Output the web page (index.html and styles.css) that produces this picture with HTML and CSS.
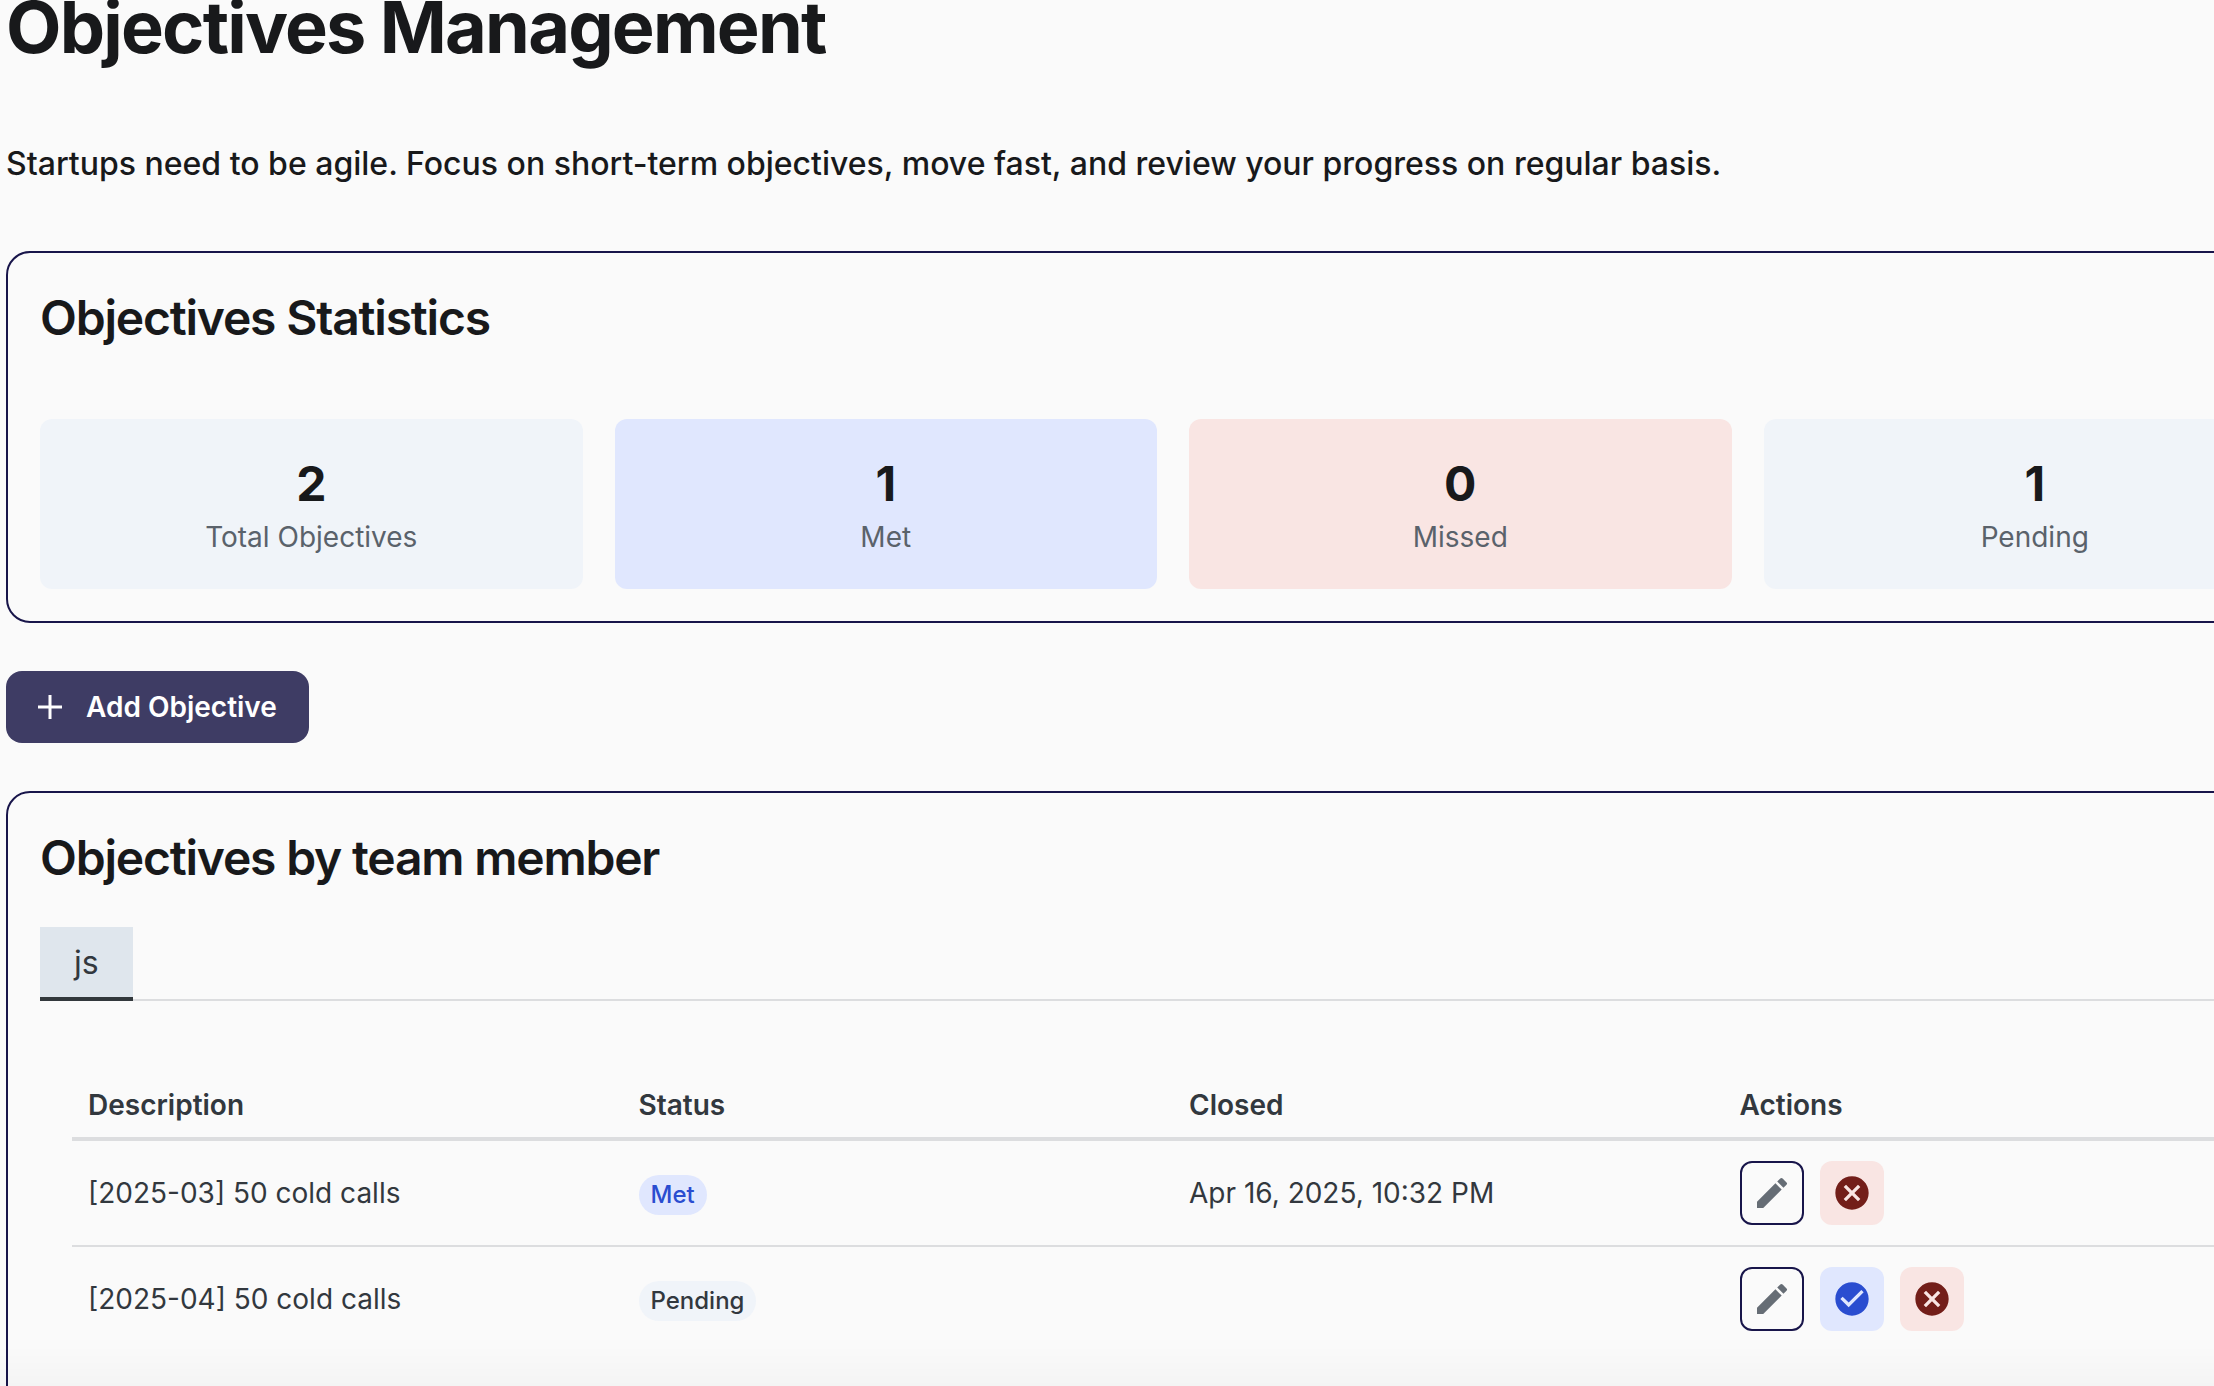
FILE: index.html
```html
<!DOCTYPE html>
<html lang="en">
<head>
  <meta charset="UTF-8">
  <title>Objectives Management</title>
  <link rel="stylesheet" href="styles.css">
</head>
<body>
  <main class="page">
    <h1>Objectives Management</h1>
    <p class="intro">Startups need to be agile. Focus on short-term objectives, move fast, and review your progress on regular basis.</p>

    <section class="card">
      <h2>Objectives Statistics</h2>
      <div class="stats">
        <div class="stat">
          <div class="stat-value">2</div>
          <div class="stat-label">Total Objectives</div>
        </div>
        <div class="stat stat-met">
          <div class="stat-value">1</div>
          <div class="stat-label">Met</div>
        </div>
        <div class="stat stat-missed">
          <div class="stat-value">0</div>
          <div class="stat-label">Missed</div>
        </div>
        <div class="stat">
          <div class="stat-value">1</div>
          <div class="stat-label">Pending</div>
        </div>
      </div>
    </section>

    <button type="button" class="add-btn">
      <svg viewBox="0 0 24 24" width="24" height="24" fill="none" stroke="currentColor" stroke-width="3"><path d="M12 0v24M0 12h24"/></svg>
      Add Objective
    </button>

    <section class="card">
      <h2>Objectives by team member</h2>
      <div class="tabs" role="tablist">
        <button type="button" class="tab" role="tab" aria-selected="true">js</button>
      </div>

      <div class="tab-panel" role="tabpanel">
        <table>
          <thead>
            <tr>
              <th>Description</th>
              <th>Status</th>
              <th>Closed</th>
              <th>Actions</th>
            </tr>
          </thead>
          <tbody>
            <tr>
              <td>[2025-03] 50 cold calls</td>
              <td><span class="badge badge-met">Met</span></td>
              <td>Apr 16, 2025, 10:32 PM</td>
              <td>
                <div class="actions">
                  <button type="button" class="icon-btn edit" aria-label="Edit"><svg viewBox="0 0 24 24"><use href="#i-pencil"/></svg></button>
                  <button type="button" class="icon-btn missed" aria-label="Mark as missed"><svg viewBox="0 0 24 24"><use href="#i-cross"/></svg></button>
                </div>
              </td>
            </tr>
            <tr>
              <td>[2025-04] 50 cold calls</td>
              <td><span class="badge">Pending</span></td>
              <td></td>
              <td>
                <div class="actions">
                  <button type="button" class="icon-btn edit" aria-label="Edit"><svg viewBox="0 0 24 24"><use href="#i-pencil"/></svg></button>
                  <button type="button" class="icon-btn met" aria-label="Mark as met"><svg viewBox="0 0 24 24"><use href="#i-check"/></svg></button>
                  <button type="button" class="icon-btn missed" aria-label="Mark as missed"><svg viewBox="0 0 24 24"><use href="#i-cross"/></svg></button>
                </div>
              </td>
            </tr>
          </tbody>
        </table>
      </div>
    </section>
  </main>
  <div class="bottom-fade"></div>

  <svg class="sprite" aria-hidden="true">
    <symbol id="i-pencil" viewBox="0 0 24 24">
      <path d="M14.06 6.19 17.81 9.94 6.75 21H3v-3.75zM20.71 7.04a1 1 0 0 0 0-1.41l-2.34-2.34a1 1 0 0 0-1.41 0l-1.83 1.83 3.75 3.75z"/>
    </symbol>
    <symbol id="i-cross" viewBox="0 0 24 24">
      <path d="M12 2C6.47 2 2 6.47 2 12s4.47 10 10 10 10-4.47 10-10S17.53 2 12 2zm5 13.59L15.59 17 12 13.41 8.41 17 7 15.59 10.59 12 7 8.41 8.41 7 12 10.59 15.59 7 17 8.41 13.41 12z"/>
    </symbol>
    <symbol id="i-check" viewBox="0 0 24 24">
      <path d="M12 2C6.48 2 2 6.48 2 12s4.48 10 10 10 10-4.48 10-10S17.52 2 12 2zm-2 15-5-5 1.41-1.41L10 14.17l7.59-7.59L19 8z"/>
    </symbol>
  </svg>
</body>
</html>
```
FILE: styles.css
```css
* {
  box-sizing: border-box;
}

body {
  font-family: Inter, sans-serif;
  font-size: 28px;
  line-height: 42px;
  background: #fafafa;
  color: #18191b;
  margin: 0;
  height: 100vh;
  overflow: hidden;
}

/* the content runs past the right edge of the window */
.page {
  margin: -20px -126px 0 6px;
}

h1 {
  font-size: 72px;
  font-weight: 700;
  line-height: 94px;
  letter-spacing: -0.025em;
  margin: 0 0 66px;
}

.intro {
  font-size: 32px;
  font-weight: 500;
  line-height: 48px;
  margin: 0 0 63px;
}

.card {
  border: 2px solid #18154a;
  border-radius: 24px;
  padding: 32px;
}

h2 {
  font-size: 48px;
  font-weight: 600;
  line-height: 66px;
  letter-spacing: -0.025em;
  margin: 0;
}

.stats {
  display: grid;
  grid-template-columns: repeat(4, 1fr);
  gap: 32px;
  margin-top: 68px;
}

.stat {
  background: #f0f4f9;
  border-radius: 12px;
  padding: 32px;
  text-align: center;
}

.stat-met {
  background: #e0e7fe;
}

.stat-missed {
  background: #f9e5e3;
}

.stat-value {
  font-size: 48px;
  font-weight: 700;
  line-height: 66px;
}

.stat-label {
  color: #5a626b;
  line-height: 40px;
}

button {
  font-family: inherit;
  border: none;
  cursor: pointer;
}

.add-btn {
  display: flex;
  align-items: center;
  gap: 24px;
  height: 72px;
  margin: 48px 0;
  padding: 0 32px;
  border-radius: 16px;
  background: #3e3c64;
  color: #fff;
  font-size: 28px;
  font-weight: 600;
}

.tabs {
  display: flex;
  margin-top: 36px;
  box-shadow: inset 0 -2px #dcdddf;
}

.tab {
  padding: 12px 34px 10px;
  border-bottom: 4px solid #32383c;
  background: #dfe6ed;
  color: #32383e;
  font-size: 32px;
  line-height: 48px;
}

.tab-panel {
  padding: 72px 32px;
}

table {
  width: 100%;
  table-layout: fixed;
  border-collapse: separate;
  border-spacing: 0;
  color: #32383e;
}

th,
td {
  padding: 0 16px;
  text-align: left;
}

th {
  padding: 11px 16px;
  font-weight: 600;
  border-bottom: 4px solid #dcdddf;
}

td {
  padding: 20px 16px;
  border-bottom: 2px solid #dcdddf;
}

tr:last-child td {
  border-bottom: none;
}

.badge {
  display: inline-block;
  padding: 0 12px;
  border-radius: 20px;
  background: #f0f4f9;
  font-size: 24px;
  font-weight: 500;
  line-height: 40px;
}

.badge-met {
  background: #e0e7fe;
  color: #2a4dd0;
}

.actions {
  display: flex;
  gap: 16px;
}

.icon-btn {
  display: flex;
  align-items: center;
  justify-content: center;
  width: 64px;
  height: 64px;
  padding: 0;
  border-radius: 12px;
}

.icon-btn svg {
  width: 40px;
  height: 40px;
  fill: currentColor;
}

.edit {
  border: 2px solid #18154a;
  background: none;
  color: #666d75;
}

.met {
  background: #e0e7fe;
  color: #2a4dd0;
}

.missed {
  background: #f9e5e3;
  color: #731e19;
}

.sprite {
  display: none;
}

.bottom-fade {
  position: fixed;
  left: 0;
  right: 0;
  bottom: 0;
  height: 40px;
  background: linear-gradient(rgba(0, 0, 0, 0), rgba(0, 0, 0, 0.025));
  pointer-events: none;
}
```
